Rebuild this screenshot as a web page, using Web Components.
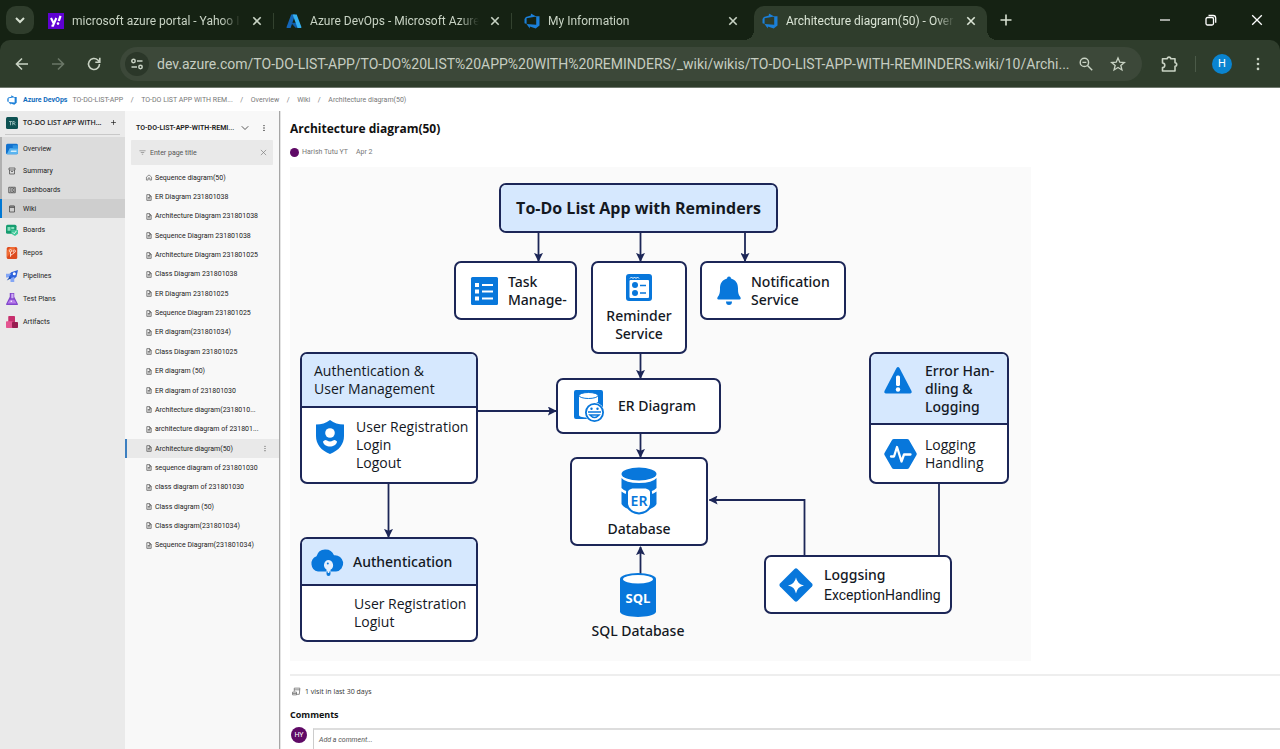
<!DOCTYPE html>
<html lang="en">
<head>
<meta charset="utf-8">
<title>Architecture diagram(50) - Overview</title>
<style>
  html, body { margin: 0; height: 100%; }
  body { font-family: Roboto, "Open Sans", sans-serif; overflow: hidden; background: #fff; color: #222; }
</style>
</head>
<body>
<wiki-app></wiki-app>
<script>
const ICONS = {
  chevron: ['0 0 16 16', '<path d="M4 6l4 4 4-4" fill="none" stroke="currentColor" stroke-width="2"/>'],
  chevronThin: ['0 0 16 16', '<path d="M1.500 4.500l6.500 6.500 6.500-6.500" fill="none" stroke="currentColor" stroke-width="1.500"/>'],
  close: ['0 0 16 16', '<path d="M4.300 4.300l7.400 7.400M11.700 4.300l-7.400 7.400" stroke="currentColor" stroke-width="1.600"/>'],
  closeThin: ['0 0 16 16', '<path d="M2 2l12 12M14 2L2 14" stroke="currentColor" stroke-width="1.500"/>'],
  plus: ['0 0 16 16', '<path d="M8 2.500v11M2.500 8h11" stroke="currentColor" stroke-width="1.600"/>'],
  minimize: ['0 0 16 16', '<path d="M3 8h10" stroke="currentColor" stroke-width="1.200"/>'],
  restore: ['0 0 16 16', '<rect x="3" y="5.500" width="7.500" height="7.500" rx="1.500" fill="none" stroke="currentColor" stroke-width="1.300"/><path d="M5.500 3.500h4.500a2.700 2.700 0 0 1 2.700 2.700v4.500" fill="none" stroke="currentColor" stroke-width="1.300"/>'],
  winClose: ['0 0 16 16', '<path d="M3.200 3.200l9.600 9.600M12.800 3.200l-9.600 9.600" stroke="currentColor" stroke-width="1.300"/>'],
  back: ['0 0 16 16', '<path d="M14 8H3M8 2.500L2.500 8 8 13.500" fill="none" stroke="currentColor" stroke-width="1.600"/>'],
  forward: ['0 0 16 16', '<path d="M2 8h11M8 2.500L13.500 8 8 13.500" fill="none" stroke="currentColor" stroke-width="1.600"/>'],
  reload: ['0 0 16 16', '<path d="M13.500 8A5.500 5.500 0 1 1 11.800 4L13.500 5.700M13.800 1.800v4.500H9.300" fill="none" stroke="currentColor" stroke-width="1.600"/>'],
  tune: ['0 0 16 16', '<g fill="none" stroke="currentColor" stroke-width="1.500"><circle cx="4.500" cy="5" r="1.700"/><path d="M8 5h5.500"/><circle cx="11.500" cy="11" r="1.700"/><path d="M2.500 11h5.500"/></g>'],
  zoomOut: ['0 0 18 18', '<g fill="none" stroke="currentColor" stroke-width="1.600"><circle cx="7.200" cy="7.200" r="4.700"/><path d="M10.700 10.700l5.300 5.300M5 7.200h4.400"/></g>'],
  star: ['0 0 18 18', '<path d="M9 2.300l2 4.700 5.100.4-3.900 3.300 1.200 5L9 13l-4.400 2.700 1.200-5L1.900 7.400 7 7z" fill="none" stroke="currentColor" stroke-width="1.500"/>'],
  puzzle: ['0 0 18 18', '<path d="M2.500 3.800h4.800a1.700 1.700 0 0 1 3.400 0h4.300v4a1.700 1.700 0 0 1 0 3.400V16H2.500v-3.400a2.300 2.300 0 0 0 0-4.600z" fill="none" stroke="currentColor" stroke-width="1.600" stroke-linejoin="round"/>'],
  dots: ['0 0 18 18', '<g fill="currentColor"><circle cx="9" cy="3.500" r="1.500"/><circle cx="9" cy="9" r="1.500"/><circle cx="9" cy="14.500" r="1.500"/></g>'],
  yahoo: ['0 0 16 16', '<rect width="16" height="16" fill="#5f01d1"/><path d="M3 5l2.600 5.300M8.300 5L5 12.700H3.500" fill="none" stroke="#fff" stroke-width="2.100"/><path d="M12.500 2.800L10.800 8" stroke="#fff" stroke-width="2.300"/><circle cx="10" cy="10.600" r="1.300" fill="#fff"/>'],
  azure: ['0 0 16 16', '<path d="M5.200 1.500h4L4.600 15H1.300a.7.700 0 0 1-.7-1z" fill="#1466b8"/><path d="M5 9.800h6.500l1 4.700-3 .3z" fill="#0f5ca8"/><path d="M10.700 1.500H6.600l4.700 12.800c.2.600-.2.800-.6.800h4c.5 0 .8-.5.700-1z" fill="#35b0f0"/>'],
  devops: ['0 0 16 16', '<path d="M15.500 3.200v9.200l-3.800 3.100-5.900-2.100v2L2.500 11l9.700.8V3.300zM12.300 3.400L6.900.4v2.200L1.900 4 .5 5.900v4.300l2.100.9V5.300z" fill="#1b7fd8"/>'],
  project: ['0 0 16 16', '<rect width="16" height="16" rx="2" fill="#0d5152"/><path d="M4 6h4M6 6v5M9 11V6h2l1 1.300-1 1.200H9M11 8.500l1.300 2.500" fill="none" stroke="#b7d6d4" stroke-width="1"/>'],
  overview: ['0 0 16 16', '<rect y="1" width="16" height="14" rx="2" fill="#1272ce"/><path d="M5 7h11v6a2 2 0 0 1-2 2H1z" fill="#59b4f0"/><path d="M7 10h7v2H6z" fill="#d3edfb"/><path d="M9 3h7v4H9z" fill="#2f94e2"/>'],
  summary: ['0 0 16 16', '<path d="M2 2h12v4H2zM3 6v8h10V6M6 9h4" fill="none" stroke="currentColor" stroke-width="1.400"/>'],
  dashboards: ['0 0 16 16', '<path d="M1.500 2.500h13v11h-13zM8 2.500v11M8 8h6.500M3.500 5.500H6M3.500 8H6M3.500 10.500H6M10 5h3M10 11h3" fill="none" stroke="currentColor" stroke-width="1.600"/>'],
  wiki: ['0 0 16 16', '<path d="M3 2h10v12H3zM3 5h10M6 1v3M10 1v3" fill="none" stroke="currentColor" stroke-width="1.500"/>'],
  boards: ['0 0 16 16', '<rect y="1" width="14" height="12" rx="2" fill="#169c70"/><path d="M2 4h4v5H2zM7 4h4v3H7z" fill="#86dfbc"/><path d="M7 8h9v5l-4 3-5-3z" fill="#40c798"/><path d="M9 11l2 2 3-4" fill="none" stroke="#fff" stroke-width="1.200"/>'],
  repos: ['0 0 16 16', '<rect x="1" width="14" height="16" rx="2" fill="#dd4b1f"/><path d="M1 5l5-5h7L1 14z" fill="#ef6d35"/><g fill="none" stroke="#ffe3d7" stroke-width="1.200"><circle cx="6" cy="5" r="1.600"/><circle cx="11" cy="5.500" r="1.600"/><path d="M6 6.600V13M11 7c0 3-5 2-5 5"/></g>'],
  pipelines: ['0 0 16 16', '<path d="M7 3l9-3-2 9-6 5-6-6z" fill="#2d62dc"/><path d="M0 5h7l-4 5H0zM6 11l5-2v7H6z" fill="#84a6f4"/><circle cx="11" cy="5" r="2" fill="#fff"/><path d="M1 14l4-5 2 2z" fill="#1646b0"/>'],
  tests: ['0 0 16 16', '<path d="M5 0h6v5l5 10q0 1-1 1H1q-1 0-1-1L5 5z" fill="#8146cb"/><path d="M7 1h3v6H7z" fill="#ceadf4"/><path d="M5 9h6l3 5H2z" fill="#b77aeb"/><circle cx="7" cy="11" r="1" fill="#fff"/>'],
  artifacts: ['0 0 16 16', '<rect x="3" width="9" height="9" rx="1" fill="#c72f6d"/><rect y="7" width="9" height="9" rx="1" fill="#e45591"/><rect x="8" y="8" width="8" height="8" rx="1" fill="#981d50"/>'],
  home: ['0 0 14 16', '<path d="M1 7l6-5 6 5v7H9V9H5v5H1z" fill="none" stroke="currentColor" stroke-width="1.500"/>'],
  page: ['0 0 12 16', '<path d="M1 1.500h6.500L11 5v9.500H1zM7 1.500V5.500h4M3 8h6M3 11h6" fill="none" stroke="currentColor" stroke-width="1.700"/>'],
  filter: ['0 0 16 16', '<path d="M1 4h14M4 8h8M6.500 12h3" stroke="currentColor" stroke-width="1.400"/>'],
  visits: ['0 0 16 16', '<path d="M4 8V2h10l-1 11H8M14 5H4" fill="none" stroke="currentColor" stroke-width="1.300"/><path d="M1 9h7v5H1zM1 11.500h7" fill="none" stroke="currentColor" stroke-width="1.300"/>'],
  tasks: ['0 0 27 28', '<rect width="27" height="28" rx="1.500" fill="#0877db"/><path d="M4 6h4v4H4zM4 12.500h4v4H4zM4 19.500h4v4H4zM11 7h11v2H11zM11 13.500h11v2H11zM11 20.500h11v2H11z" fill="#fff"/>'],
  calendar: ['0 0 26 27', '<rect width="26" height="27" rx="3" fill="#0877db"/><rect x="3.500" y="6" width="19.500" height="18" rx="1" fill="#fff"/><path d="M4 4.500l1.500-1.500L7 4.500 8.500 3 10 4.500 11.500 3 13 4.500" stroke="#fff" fill="none"/><circle cx="9" cy="11" r="3" fill="#0877db"/><circle cx="9" cy="19" r="3" fill="#0877db"/><path d="M14 11.500h6M14 19h6" stroke="#0877db" stroke-width="1.600"/>'],
  bell: ['0 0 24 30', '<path d="M10 2.500a2 2 0 0 1 4 0c5 1.500 7 5 7 10 0 4 .3 6 2.300 8.500.8 1.300.5 2.500-.8 2.500h-21C.2 23.500-.1 22.300.7 21 2.700 18.500 3 16.500 3 12.500c0-5 2-8.500 7-10zM9 25.500h6a3 3.600 0 0 1-6 0z" fill="#0877db"/>'],
  shield: ['0 0 28 34', '<path d="M14 0c4 3 8.500 4.500 14 4.500V16c0 8-5 14.500-14 18C5 30.500 0 24 0 16V4.500C5.500 4.500 10 3 14 0z" fill="#0877db"/><circle cx="14" cy="13" r="4.800" fill="#fff"/><path d="M7 21.500q2-2.500 4-1 3 1.800 6 0 2-1.500 4 1c0 3-4 5-7 5s-7-2-7-5z" fill="#fff"/>'],
  cloud: ['0 0 34 28', '<path d="M8 23.500a8 8 0 0 1-1.500-15.300 9.300 9.300 0 0 1 17.500-1A8.200 8.200 0 0 1 26 23.500z" fill="#0877db"/><path d="M18 12a5.200 5.200 0 0 1 2.500 9.700v5.200h-4v-5.400A5.200 5.200 0 0 1 18 12z" fill="#e4f0fe"/><path d="M16.500 23.500h4V26q0 2-2 2t-2-2z" fill="#0877db"/><path d="M18.500 19v6" stroke="#e4f0fe" stroke-width="1.500"/><circle cx="17.800" cy="15.500" r="1" fill="#0877db"/>'],
  er: ['0 0 30 32', '<path d="M0 2a2 2 0 0 1 2-2h25a2 2 0 0 1 2 2v17H14v10H2a2 2 0 0 1-2-2z" fill="#0877db"/><path d="M5 6v19c0 2 5 2.500 9 2.500V17l10-5V6z" fill="#fff"/><ellipse cx="14.500" cy="5.500" rx="9.500" ry="3" fill="#fff" stroke="#0877db"/><circle cx="20.500" cy="22.500" r="10" fill="#fff"/><circle cx="20.500" cy="22.500" r="8.600" fill="#fff" stroke="#0877db" stroke-width="1.800"/><path d="M14 22h13M16 25q4.500 5 9 0z" fill="none" stroke="#0877db" stroke-width="1.600"/><circle cx="17.500" cy="18.800" r="1.200" fill="#0877db"/><circle cx="23.500" cy="18.800" r="1.200" fill="#0877db"/>'],
  warning: ['0 0 28 27', '<path d="M12.500 1Q14 -1 15.500 1L27.500 24q.8 2-1.500 2.500H2Q-.3 26 .5 24z" fill="#0877db"/><rect x="12" y="8.500" width="4" height="10.500" rx="1.500" fill="#fff"/><circle cx="14" cy="22.500" r="2.200" fill="#fff"/>'],
  pulse: ['0 0 33 30', '<path d="M8 1q.5-1 2-1h13q1.500 0 2 1l7.500 13q.6 1 0 2L25 29q-.5 1-2 1H10q-1.500 0-2-1L.5 16q-.6-1 0-2z" fill="#0877db"/><path d="M7 17.500h3l3-9.500 4.500 14.500 2.500-7h6.500" fill="none" stroke="#fff" stroke-width="2.300" stroke-linecap="round" stroke-linejoin="round"/>'],
  spark: ['0 0 34 34', '<path d="M15.500 1q1.500-1.400 3 0L33 15.500q1.400 1.500 0 3L18.500 33q-1.500 1.400-3 0L1 18.500q-1.400-1.500 0-3z" fill="#0877db"/><path d="M17 9.500q1.200 6.500 8 8-6.800 1.200-8 8-1.200-6.800-8-8 6.800-1.500 8-8z" fill="#fff"/>'],
  erDatabase: ['0 0 36 47', '<ellipse cx="18" cy="7" rx="17.500" ry="6.500" fill="#0877db"/><path d="M.5 11q4 5 17.500 5t17.500-5v10q-4 5-17.500 5T.5 21zM.5 24.500q4 4 17.500 4t17.500-4V37q-2 4-10 6H11Q3 41.500.5 37z" fill="#0877db"/><path d="M6 25q0-3 5-4.500h14q5 1.500 5 4.500v12q-1 8-12 9.500Q7 45 6 37z" fill="#fff" stroke="#0877db" stroke-width="2"/><text x="18" y="38.500" text-anchor="middle" font-family="Noto Sans, sans-serif" font-size="14" font-weight="600" fill="#0877db">ER</text>'],
  sqlDatabase: ['0 0 36 44', '<path d="M0 6v33c3 6.500 33 6.500 36 0V6z" fill="#0877db"/><ellipse cx="18" cy="6" rx="18" ry="6" fill="#0877db"/><ellipse cx="18" cy="6.300" rx="15" ry="4.200" fill="#fff"/><text x="18" y="30" text-anchor="middle" font-family="Open Sans, sans-serif" font-size="13" font-weight="700" fill="#fff">SQL</text>']
};

const RESET = `
  *, *::before, *::after { box-sizing: border-box; }
  button { border: 0; padding: 0; background: none; color: inherit; font: inherit; display: grid; place-items: center; }
  a { color: inherit; text-decoration: none; }
  input, textarea { border: 0; padding: 0; margin: 0; background: none; color: inherit; font: inherit; min-width: 0; outline: 0; }
  ul, ol, h1, h2, p { margin: 0; padding: 0; list-style: none; }
`;

function component(name, css, markup) {
  customElements.define(name, class extends HTMLElement {
    constructor() {
      super();
      const t = document.createElement('template');
      this.attachShadow({ mode: 'open' });
      t.innerHTML = `<style>${RESET}${css}</style>${typeof markup === 'function' ? markup(this) : markup}`;
      this.shadowRoot.append(t.content.cloneNode(true));
    }
  });
}

component('ui-icon', `
  :host { display: block; flex: none; width: var(--w, 16px); height: var(--h, var(--w, 16px)); }
  svg { display: block; width: 100%; height: 100%; overflow: visible; }
`, el => {
  const [box, body] = ICONS[el.getAttribute('name')];
  return `<svg viewBox="${box}" aria-hidden="true">${body}</svg>`;
});

component('browser-tab', `
  :host { display: flex; flex: 0 1 238px; min-width: 0; height: 34px; align-items: center; color: #c8d3c4; }
  .tab { position: relative; flex: 1; min-width: 0; height: 34px; display: flex; align-items: center; gap: 8px; padding: 0 8px 5px; font-size: 12px; }
  .title { flex: 1; min-width: 0; line-height: 20px; padding-top: 1px; white-space: nowrap; overflow: hidden; mask-image: linear-gradient(to left, transparent, #000 20px); }
  .rule { width: 5px; height: 16px; margin-bottom: 5px; border-left: 1px solid #33422f; }
  :host([active]) .tab { background: #2f3d2c; border-radius: 10px 10px 0 0; color: #dbe5d6; }
  :host([active]) .tab::before, :host([active]) .tab::after { content: ""; position: absolute; bottom: 0; width: 10px; height: 10px; }
  :host([active]) .tab::before { left: -10px; background: radial-gradient(circle at 0 0, transparent 10px, #2f3d2c 10px); }
  :host([active]) .tab::after { right: -10px; background: radial-gradient(circle at 100% 0, transparent 10px, #2f3d2c 10px); }
  :host([active]) .rule, :host([last]) .rule { border-color: transparent; }
`, `
  <div class="tab"><slot name="icon"></slot><span class="title"><slot></slot></span><button aria-label="Close tab"><ui-icon name="close"></ui-icon></button></div>
  <span class="rule"></span>
`);

component('tab-strip', `
  :host { display: flex; height: 40px; padding: 6px 0 0 6px; background: #152213; color: #d6e0d1; }
  .search { width: 28px; height: 28px; margin-right: 6px; border-radius: 10px; background: #2f3d2c; }
  .new { width: 28px; height: 28px; }
  .window { margin-left: auto; display: flex; color: #fff; }
  .window button { width: 46px; height: 28px; }
`, `
  <button class="search" aria-label="Search tabs"><ui-icon name="chevron"></ui-icon></button>
  <browser-tab><ui-icon slot="icon" name="yahoo"></ui-icon>microsoft azure portal - Yahoo I</browser-tab>
  <browser-tab><ui-icon slot="icon" name="azure"></ui-icon>Azure DevOps - Microsoft Azure</browser-tab>
  <browser-tab last><ui-icon slot="icon" name="devops"></ui-icon>My Information</browser-tab>
  <browser-tab active><ui-icon slot="icon" name="devops"></ui-icon>Architecture diagram(50) - Over</browser-tab>
  <button class="new" aria-label="New tab"><ui-icon name="plus"></ui-icon></button>
  <div class="window"><button aria-label="Minimize"><ui-icon name="minimize"></ui-icon></button><button aria-label="Restore"><ui-icon name="restore"></ui-icon></button><button aria-label="Close window"><ui-icon name="winClose"></ui-icon></button></div>
`);

component('browser-toolbar', `
  :host { display: block; background: #152213; color: #c9d3c4; }
  .bar { display: flex; align-items: center; height: 48px; padding: 0 4px; background: #2f3d2c; border-bottom: 1px solid #70796e; border-radius: 10px 10px 0 0; }
  .bar > button { width: 36px; height: 36px; }
  .bar > button[disabled] { color: #6b7767; }
  .address { flex: 1; min-width: 0; display: flex; align-items: center; height: 34px; margin: 0 9px 0 8px; padding: 0 11px 0 5px; border-radius: 17px; background: #3c4839; }
  .address button { width: 26px; height: 26px; }
  .address button + button { margin-left: 6px; }
  .address .site { width: 24px; height: 24px; margin-right: 8px; border-radius: 12px; background: #2b3729; }
  input { flex: 1; height: 24px; font-size: 14px; color: #c6cdc1; text-overflow: ellipsis; }
  .rule { width: 1px; height: 16px; margin: 0 8px; background: #4b5a48; }
  .avatar span { width: 20px; height: 20px; border-radius: 10px; background: #0a84d0; color: #fff; font-size: 11px; line-height: 20px; }
`, `
  <div class="bar">
    <button aria-label="Back"><ui-icon name="back"></ui-icon></button>
    <button aria-label="Forward" disabled><ui-icon name="forward"></ui-icon></button>
    <button aria-label="Reload"><ui-icon name="reload"></ui-icon></button>
    <div class="address">
      <button class="site" aria-label="Site information"><ui-icon name="tune"></ui-icon></button>
      <input aria-label="Address" value="dev.azure.com/TO-DO-LIST-APP/TO-DO%20LIST%20APP%20WITH%20REMINDERS/_wiki/wikis/TO-DO-LIST-APP-WITH-REMINDERS.wiki/10/Archi...">
      <button aria-label="Zoom"><ui-icon name="zoomOut"></ui-icon></button>
      <button aria-label="Bookmark"><ui-icon name="star"></ui-icon></button>
    </div>
    <button aria-label="Extensions"><ui-icon name="puzzle" style="--w:18px"></ui-icon></button>
    <span class="rule"></span>
    <button class="avatar" aria-label="Profile"><span>H</span></button>
    <button aria-label="Menu"><ui-icon name="dots"></ui-icon></button>
  </div>
`);

component('crumb-bar', `
  :host { display: flex; align-items: center; height: 23px; padding-left: 7px; background: #fff; color: #777; font-size: 7px; white-space: nowrap; }
  ui-icon { --w: 10px; color: #1b7fd8; }
  .brand { margin: 0 5px 0 6px; color: #0f6cbd; font-weight: 700; }
  ol { display: flex; }
  li + li::before { content: "/"; display: inline-block; width: 18px; text-align: center; }
`, `
  <ui-icon name="devops"></ui-icon><a class="brand" href="#">Azure DevOps</a>
  <ol><li><a href="#">TO-DO-LIST-APP</a></li><li><a href="#">TO-DO LIST APP WITH REM...</a></li><li><a href="#">Overview</a></li><li><a href="#">Wiki</a></li><li><a href="#">Architecture diagram(50)</a></li></ol>
`);

component('nav-item', `
  :host { display: block; }
  a { display: flex; align-items: center; height: 23px; padding-left: 6px; gap: 5px; }
  ui-icon { --w: 12px; }
  :host([sub]) a { height: 19px; padding-left: 8px; gap: 7px; }
  :host([sub]) ui-icon { --w: 8px; color: #444; }
  :host([selected]) a { background: #cecece; box-shadow: inset 2px 0 #0078d4; }
`, el => `<a href="#"><ui-icon name="${el.getAttribute('icon')}"></ui-icon><slot></slot></a>`);

component('project-nav', `
  :host { display: block; background: #eaeaea; color: #222; font-size: 7px; }
  .project { display: flex; align-items: center; height: 24px; margin: 0 5px 2px; padding-left: 1px; gap: 5px; border-bottom: 1px solid #c8c8c8; }
  .project ui-icon { --w: 12px; }
  .project b { flex: 1; font-family: "Open Sans", sans-serif; font-weight: 600; white-space: nowrap; }
  .project button { width: 14px; height: 14px; }
  .project button ui-icon { --w: 7px; }
  .group { background: #dcdcdc; box-shadow: inset 2px 0 #b0b0b0; }
  .group nav-item:first-child { margin-bottom: 1px; }
`, `
  <div class="project"><ui-icon name="project"></ui-icon><b>TO-DO LIST APP WITH...</b><button aria-label="Add"><ui-icon name="plus"></ui-icon></button></div>
  <nav>
    <div class="group"><nav-item icon="overview">Overview</nav-item><nav-item sub icon="summary">Summary</nav-item><nav-item sub icon="dashboards">Dashboards</nav-item><nav-item sub selected icon="wiki">Wiki</nav-item></div>
    <nav-item icon="boards">Boards</nav-item><nav-item icon="repos">Repos</nav-item><nav-item icon="pipelines">Pipelines</nav-item><nav-item icon="tests">Test Plans</nav-item><nav-item icon="artifacts">Artifacts</nav-item>
  </nav>
`);

component('page-link', `
  :host { display: grid; }
  a { display: flex; align-items: center; padding: 0 10px 0 21px; gap: 3px; white-space: nowrap; }
  ui-icon { --w: 6px; --h: 7px; color: #555; }
  .label { flex: 1; }
  :host([selected]) a { background: #e9e9e9; box-shadow: inset 2px 0 #3c7fc0; }
  .more { display: none; }
  :host([selected]) .more { display: block; --w: 8px; }
`, el => `<a href="#"><ui-icon name="${el.getAttribute('icon') || 'page'}"></ui-icon><span class="label"><slot></slot></span><ui-icon class="more" name="dots"></ui-icon></a>`);

component('page-tree', `
  :host { display: block; background: #f8f8f8; border-right: 1px solid #a6a6a6; color: #222; font-size: 7px; }
  .head { display: flex; align-items: center; height: 29px; padding: 4px 6px 0 11px; }
  .head b { flex: 1; font-weight: 600; white-space: nowrap; }
  .head button { width: 19px; height: 19px; }
  .head ui-icon { --w: 8px; }
  .filter { display: flex; align-items: center; height: 25px; margin: 0 6px 3px; padding: 0 6px 0 8px; gap: 4px; background: #e9e9e9; border-radius: 1px; color: #777; }
  .filter ui-icon { --w: 7px; }
  .filter input { flex: 1; height: 14px; }
  .filter input::placeholder { color: #555; opacity: 1; }
  nav { display: grid; grid-auto-rows: 1fr; height: 387px; }
`, `
  <div class="head"><b>TO-DO-LIST-APP-WITH-REMI...</b><button aria-label="Switch wiki"><ui-icon name="chevronThin"></ui-icon></button><button aria-label="More"><ui-icon name="dots"></ui-icon></button></div>
  <div class="filter"><ui-icon name="filter"></ui-icon><input aria-label="Filter pages" placeholder="Enter page title"><button aria-label="Clear"><ui-icon name="closeThin"></ui-icon></button></div>
  <nav aria-label="Wiki pages">
    <page-link icon="home">Sequence diagram(50)</page-link>
    <page-link>ER Diagram 231801038</page-link>
    <page-link>Architecture Diagram 231801038</page-link>
    <page-link>Sequence Diagram 231801038</page-link>
    <page-link>Architecture Diagram 231801025</page-link>
    <page-link>Class Diagram 231801038</page-link>
    <page-link>ER Diagram 231801025</page-link>
    <page-link>Sequence Diagram 231801025</page-link>
    <page-link>ER diagram(231801034)</page-link>
    <page-link>Class Diagram 231801025</page-link>
    <page-link>ER diagram (50)</page-link>
    <page-link>ER diagram of 231801030</page-link>
    <page-link>Architecture diagram(2318010...</page-link>
    <page-link>architecture diagram of 231801...</page-link>
    <page-link selected>Architecture diagram(50)</page-link>
    <page-link>sequence diagram of 231801030</page-link>
    <page-link>class diagram of 231801030</page-link>
    <page-link>Class diagram (50)</page-link>
    <page-link>Class diagram(231801034)</page-link>
    <page-link>Sequence Diagram(231801034)</page-link>
  </nav>
`);

component('diagram-node', `
  :host { display: flex; flex-direction: column; overflow: hidden; background: #fff; border: 2px solid #1c2657; border-radius: 7px; }
  .head { flex: none; display: none; align-items: center; background: #d6e8fe; border-bottom: 2px solid #1c2657; }
  :host([split]) .head { display: flex; height: var(--head); }
  .body { flex: 1; display: flex; align-items: center; }
  .head, .body { padding-left: var(--pad, 0); gap: var(--gap, 0); }
  .head { padding-left: var(--head-pad, var(--pad, 0)); gap: var(--head-gap, var(--gap, 0)); }
  :host([stacked]) .body { flex-direction: column; justify-content: center; gap: 6px; padding-top: 1px; text-align: center; }
  :host([main]) .body { justify-content: center; background: #d6e8fe; }
`, `<div class="head"><slot name="head"></slot></div><div class="body"><slot></slot></div>`);

component('architecture-diagram', `
  :host { display: block; position: relative; width: 741px; height: 494px; background: #fafafa; color: #14181f; font-family: "Noto Sans", "Open Sans", sans-serif; font-size: 14px; font-weight: 500; line-height: 18px; white-space: nowrap; }
  .wires { position: absolute; inset: 0; width: 741px; height: 494px; }
  diagram-node, .sql { position: absolute; }
  .list, .users { font-family: "Open Sans", sans-serif; }
  .long { font-family: Roboto, sans-serif; font-weight: 400; }
  .app { left: 209px; top: 16px; width: 279px; height: 50px; font-size: 16px; font-weight: 700; }
  .task { left: 164px; top: 94px; width: 123px; height: 59px; --pad: 15px; --gap: 10px; }
  .reminder { left: 301px; top: 94px; width: 96px; height: 93px; }
  .notify { left: 410px; top: 94px; width: 146px; height: 59px; --pad: 15px; --gap: 10px; }
  .users { left: 10px; top: 185px; width: 178px; height: 132px; --head: 54px; --head-pad: 12px; --pad: 14px; --gap: 12px; }
  .auth { left: 10px; top: 370px; width: 178px; height: 105px; --head: 47px; --head-pad: 8px; --head-gap: 9px; --pad: 52px; }
  .er { left: 266px; top: 211px; width: 165px; height: 56px; --pad: 16px; --gap: 14px; }
  .db { left: 280px; top: 290px; width: 138px; height: 89px; }
  .errors { left: 579px; top: 185px; width: 140px; height: 132px; --head: 71px; --pad: 13px; --gap: 8px; --head-gap: 13px; }
  .logs { left: 474px; top: 388px; width: 188px; height: 59px; --pad: 13px; --gap: 11px; line-height: 20px; }
  .sql { left: 300px; top: 406px; width: 96px; display: flex; flex-direction: column; align-items: center; gap: 5px; }
  .raised { margin-bottom: 16px; }
`, `
  <svg class="wires" viewBox="0 0 741 494" aria-hidden="true">
    <defs><marker id="tip" viewBox="0 0 10 10" refX="9" refY="5" markerWidth="9" markerHeight="9" markerUnits="userSpaceOnUse" orient="auto"><path d="M0 0l10 5-10 5 2-5z" fill="#1c2657"/></marker></defs>
    <g fill="none" stroke="#1c2657" stroke-width="1.800">
      <g marker-end="url(#tip)"><path d="M248.500 66v28"/><path d="M350.500 66v28"/><path d="M455 66v28"/><path d="M350.500 187v24"/><path d="M350.500 267v23"/><path d="M188 244h78"/><path d="M98.500 317v53"/><path d="M350.500 407v-27"/><path d="M514.500 388v-55h-95"/></g>
      <path d="M649 317v71"/>
    </g>
  </svg>
  <diagram-node class="app" main><span style="font-family:'Open Sans',sans-serif">To-Do List App with Reminders</span></diagram-node>
  <diagram-node class="task"><ui-icon name="tasks" style="--w:27px;--h:28px"></ui-icon><span>Task<br>Manage-</span></diagram-node>
  <diagram-node class="reminder" stacked><ui-icon name="calendar" style="--w:26px;--h:27px"></ui-icon><span>Reminder<br>Service</span></diagram-node>
  <diagram-node class="notify"><ui-icon name="bell" style="--w:24px;--h:30px"></ui-icon><span>Notification<br>Service</span></diagram-node>
  <diagram-node class="users" split><span slot="head">Authentication &amp;<br>User Management</span><ui-icon class="raised" name="shield" style="--w:28px;--h:34px"></ui-icon><span>User Registration<br>Login<br>Logout</span></diagram-node>
  <diagram-node class="auth" split><ui-icon slot="head" name="cloud" style="--w:34px;--h:28px"></ui-icon><span slot="head">Authentication</span><span class="list">User Registration<br>Logiut</span></diagram-node>
  <diagram-node class="er"><ui-icon name="er" style="--w:30px;--h:32px"></ui-icon><span>ER Diagram</span></diagram-node>
  <diagram-node class="db" stacked><ui-icon name="erDatabase" style="--w:36px;--h:47px"></ui-icon><span>Database</span></diagram-node>
  <diagram-node class="errors" split><ui-icon slot="head" class="raised" name="warning" style="--w:28px;--h:27px"></ui-icon><span slot="head">Error Han-<br>dling &amp;<br>Logging</span><ui-icon name="pulse" style="--w:33px;--h:30px"></ui-icon><span class="list">Logging<br>Handling</span></diagram-node>
  <diagram-node class="logs"><ui-icon name="spark" style="--w:34px;--h:34px"></ui-icon><span>Loggsing<br><span class="long">ExceptionHandling</span></span></diagram-node>
  <div class="sql"><ui-icon name="sqlDatabase" style="--w:36px;--h:44px"></ui-icon><span>SQL Database</span></div>
`);

component('wiki-page', `
  :host { display: block; min-width: 0; padding: 8px 0 0 9px; background: #fff; border-left: 1px solid #e4e4e4; font-size: 7px; }
  h1, h2, .visits { font-family: "Open Sans", sans-serif; }
  h1 { font-size: 12px; line-height: 20px; font-weight: 700; color: #111; }
  .meta { display: flex; align-items: center; height: 12px; margin: 7px 0 9px; gap: 3px; color: #777; }
  .meta time { margin-left: 5px; }
  .avatar { flex: none; display: grid; place-items: center; width: 9px; height: 9px; border-radius: 50%; background: #5f0a66; color: #fff; }
  .visits { display: flex; align-items: center; height: 32px; margin-top: 13px; padding: 0 0 0 2px; gap: 4px; border-top: 2px solid #eee; color: #333; }
  .visits ui-icon { --w: 9px; color: #666; }
  h2 { margin-top: 1px; font-size: 9px; line-height: 16px; font-weight: 700; color: #111; }
  .comment { display: flex; gap: 6px; padding: 4px 0 0 1px; }
  .comment .avatar { width: 16px; height: 16px; }
  textarea { flex: 1; height: 60px; margin-top: 1px; padding: 6px 5px; border: 1px solid #ccc; border-top: 2px solid #ddd; border-right: 0; resize: none; font-style: italic; }
  textarea::placeholder { color: #555; opacity: 1; }
`, `
  <h1>Architecture diagram(50)</h1>
  <div class="meta"><span class="avatar"></span><a href="#">Harish Tutu YT</a><time>Apr 2</time></div>
  <architecture-diagram></architecture-diagram>
  <p class="visits"><ui-icon name="visits"></ui-icon>1 visit in last 30 days</p>
  <h2>Comments</h2>
  <div class="comment"><span class="avatar">HY</span><textarea aria-label="Comment" placeholder="Add a comment..."></textarea></div>
`);

component('wiki-app', `
  :host { display: flex; flex-direction: column; height: 100vh; overflow: hidden; }
  tab-strip, browser-toolbar, crumb-bar { flex: none; }
  main { flex: 1; min-height: 0; display: grid; grid-template-columns: 125px 155px minmax(0, 1fr); }
`, `
  <tab-strip></tab-strip><browser-toolbar></browser-toolbar><crumb-bar></crumb-bar>
  <main><project-nav></project-nav><page-tree></page-tree><wiki-page></wiki-page></main>
`);
</script>
</body>
</html>
